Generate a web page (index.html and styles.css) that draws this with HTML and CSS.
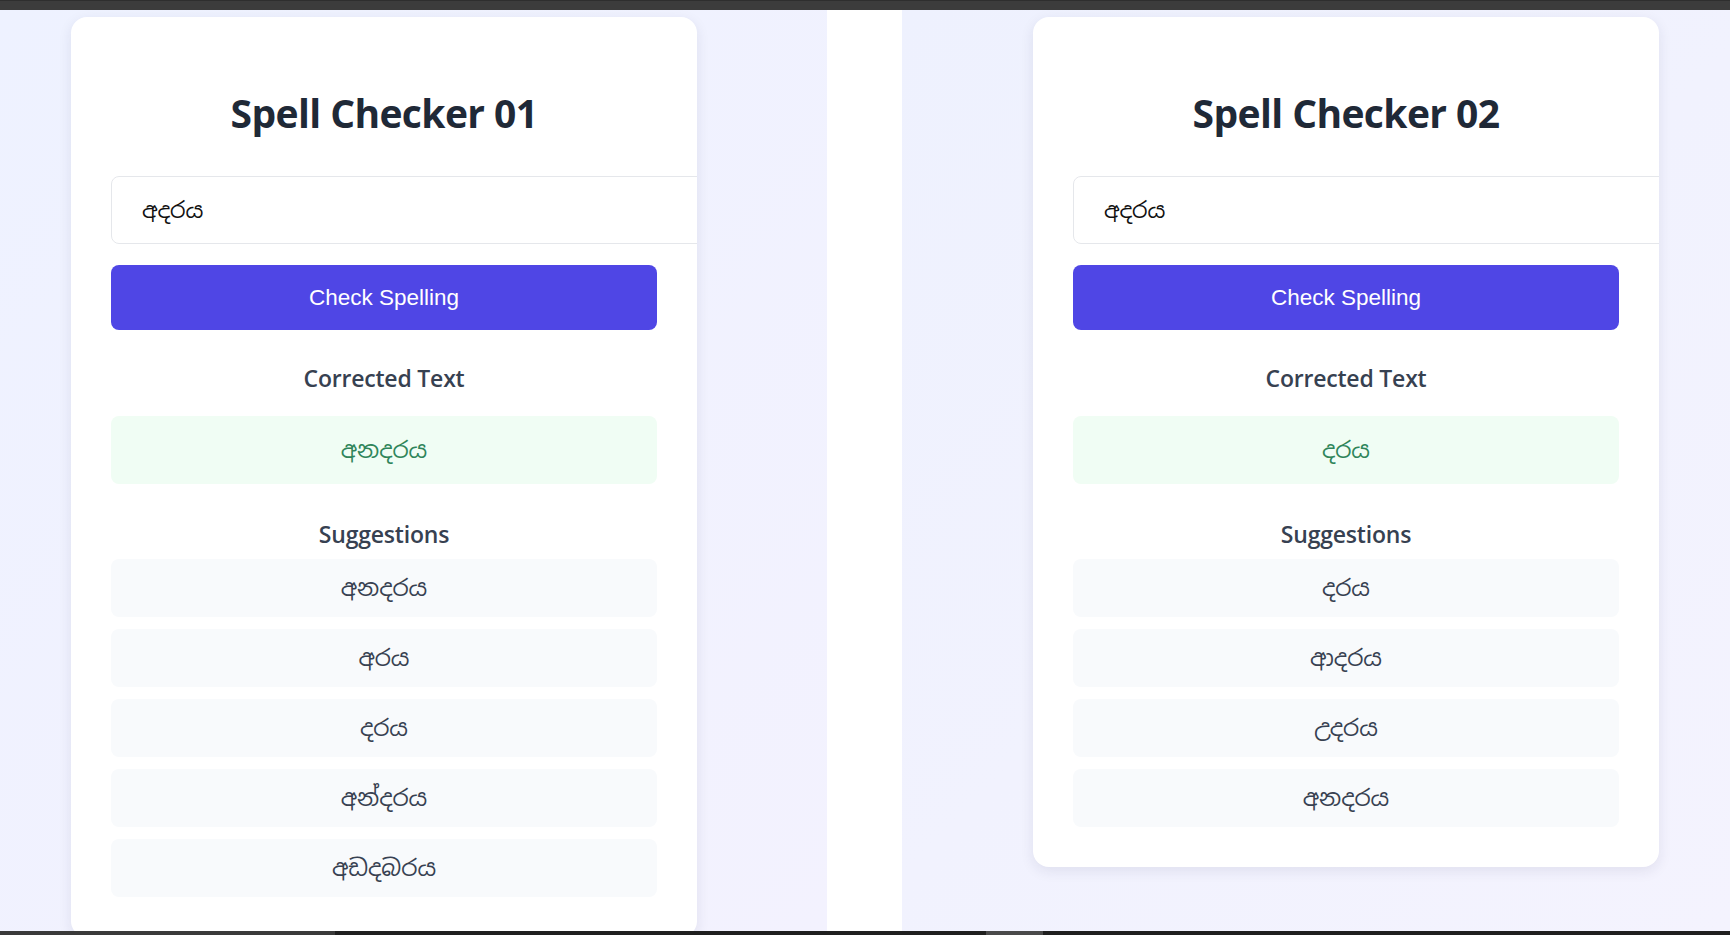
FILE: index.html
```html
<!DOCTYPE html>
<html lang="si">
<head>
<meta charset="utf-8">
<title>Spell Checkers</title>
<link rel="stylesheet" href="styles.css">
</head>
<body>
<div class="topbar"></div>
<main class="split">
  <section class="panel panel-left">
    <div class="card">
      <h1 class="title">Spell Checker 01</h1>
      <input class="word-input" type="text" value="අදරය">
      <button class="check-btn" type="button">Check Spelling</button>
      <h3 class="subhead">Corrected Text</h3>
      <div class="corrected">අනදරය</div>
      <h3 class="subhead subhead-sugg">Suggestions</h3>
      <ul class="suggestions">
        <li>අනදරය</li>
        <li>අරය</li>
        <li>දරය</li>
        <li>අන්දරය</li>
        <li>අඩදබරය</li>
      </ul>
    </div>
  </section>
  <div class="divider"></div>
  <section class="panel panel-right">
    <div class="card">
      <h1 class="title">Spell Checker 02</h1>
      <input class="word-input" type="text" value="අදරය">
      <button class="check-btn" type="button">Check Spelling</button>
      <h3 class="subhead">Corrected Text</h3>
      <div class="corrected">දරය</div>
      <h3 class="subhead subhead-sugg">Suggestions</h3>
      <ul class="suggestions">
        <li>දරය</li>
        <li>ආදරය</li>
        <li>උදරය</li>
        <li>අනදරය</li>
      </ul>
    </div>
  </section>
</main>
<div class="bottombar">
  <div class="bb-seg bb-a"></div>
  <div class="bb-seg bb-b"></div>
  <div class="bb-seg bb-c"></div>
  <div class="bb-seg bb-d"></div>
</div>
</body>
</html>
```

FILE: styles.css
```css
* { box-sizing: border-box; }
html, body { margin: 0; padding: 0; }
body {
  width: 1730px;
  height: 935px;
  overflow: hidden;
  display: flex;
  flex-direction: column;
  font-family: "Open Sans", "Noto Sans", "Noto Sans Sinhala", sans-serif;
  background: #ffffff;
}
.topbar {
  height: 10px;
  flex: none;
  background: #3c3c3c;
  border-top: 1px solid #2e2e2e;
}
.split {
  flex: 1;
  display: flex;
  min-height: 0;
}
.panel {
  overflow: hidden;
  background: linear-gradient(135deg, #eef2ff 0%, #f3f2fe 100%);
  padding-top: 7px;
}
.panel-left {
  width: 827px;
  padding-left: 71px;
}
.panel-right {
  width: 828px;
  padding-left: 131px;
  background: linear-gradient(135deg, #eef1fe 0%, #f4f3fe 100%);
}
.divider {
  width: 75px;
  background: #ffffff;
}
.card {
  width: 626px;
  background: #ffffff;
  border-radius: 16px;
  box-shadow: 0 4px 14px rgba(30, 30, 80, 0.09);
  padding: 40px 40px 40px;
  overflow: hidden;
  display: flex;
  flex-direction: column;
}
.title {
  margin: 30px 0 37px;
  height: 52px;
  line-height: 52px;
  text-align: center;
  font-size: 39px;
  font-weight: 700;
  color: #1f2937;
  letter-spacing: -0.6px;
}
.word-input {
  width: calc(100% + 60px);
  height: 68px;
  border: 1px solid #e5e7eb;
  border-radius: 8px;
  padding: 0 30px;
  font-size: 22px;
  color: #111111;
  background: #ffffff;
  font-family: "Noto Sans Sinhala", "Noto Sans", sans-serif;
  outline: none;
}
.check-btn {
  margin-top: 21px;
  height: 65px;
  width: 100%;
  border: none;
  border-radius: 8px;
  background: #4f46e5;
  color: #ffffff;
  font-family: "Liberation Sans", Arial, sans-serif;
  font-size: 22.5px;
}
.subhead {
  margin: 33px 0 0;
  height: 30px;
  line-height: 30px;
  text-align: center;
  font-size: 23px;
  font-weight: 600;
  color: #374151;
  letter-spacing: -0.2px;
}
.subhead-sugg {
  margin-top: 35px;
}
.corrected {
  margin-top: 23px;
  height: 68px;
  border-radius: 8px;
  background: #f0fdf4;
  color: #2f855a;
  display: flex;
  align-items: center;
  justify-content: center;
  font-size: 23px;
  font-family: "Noto Sans Sinhala", "Noto Sans", sans-serif;
}
.suggestions {
  list-style: none;
  margin: 10px 0 0;
  padding: 0;
  display: flex;
  flex-direction: column;
  gap: 12px;
}
.suggestions li {
  height: 58px;
  border-radius: 8px;
  background: #f8fafc;
  color: #374151;
  display: flex;
  align-items: center;
  justify-content: center;
  font-size: 23px;
  font-family: "Noto Sans Sinhala", "Noto Sans", sans-serif;
}
.bottombar {
  height: 4px;
  flex: none;
  display: flex;
  background: #1f1f1f;
}
.bb-a { width: 335px; background: #3a3a3a; }
.bb-b { width: 651px; background: #1f1f1f; }
.bb-c { width: 57px; background: #4a4a4a; }
.bb-d { flex: 1; background: #1f1f1f; }
```
